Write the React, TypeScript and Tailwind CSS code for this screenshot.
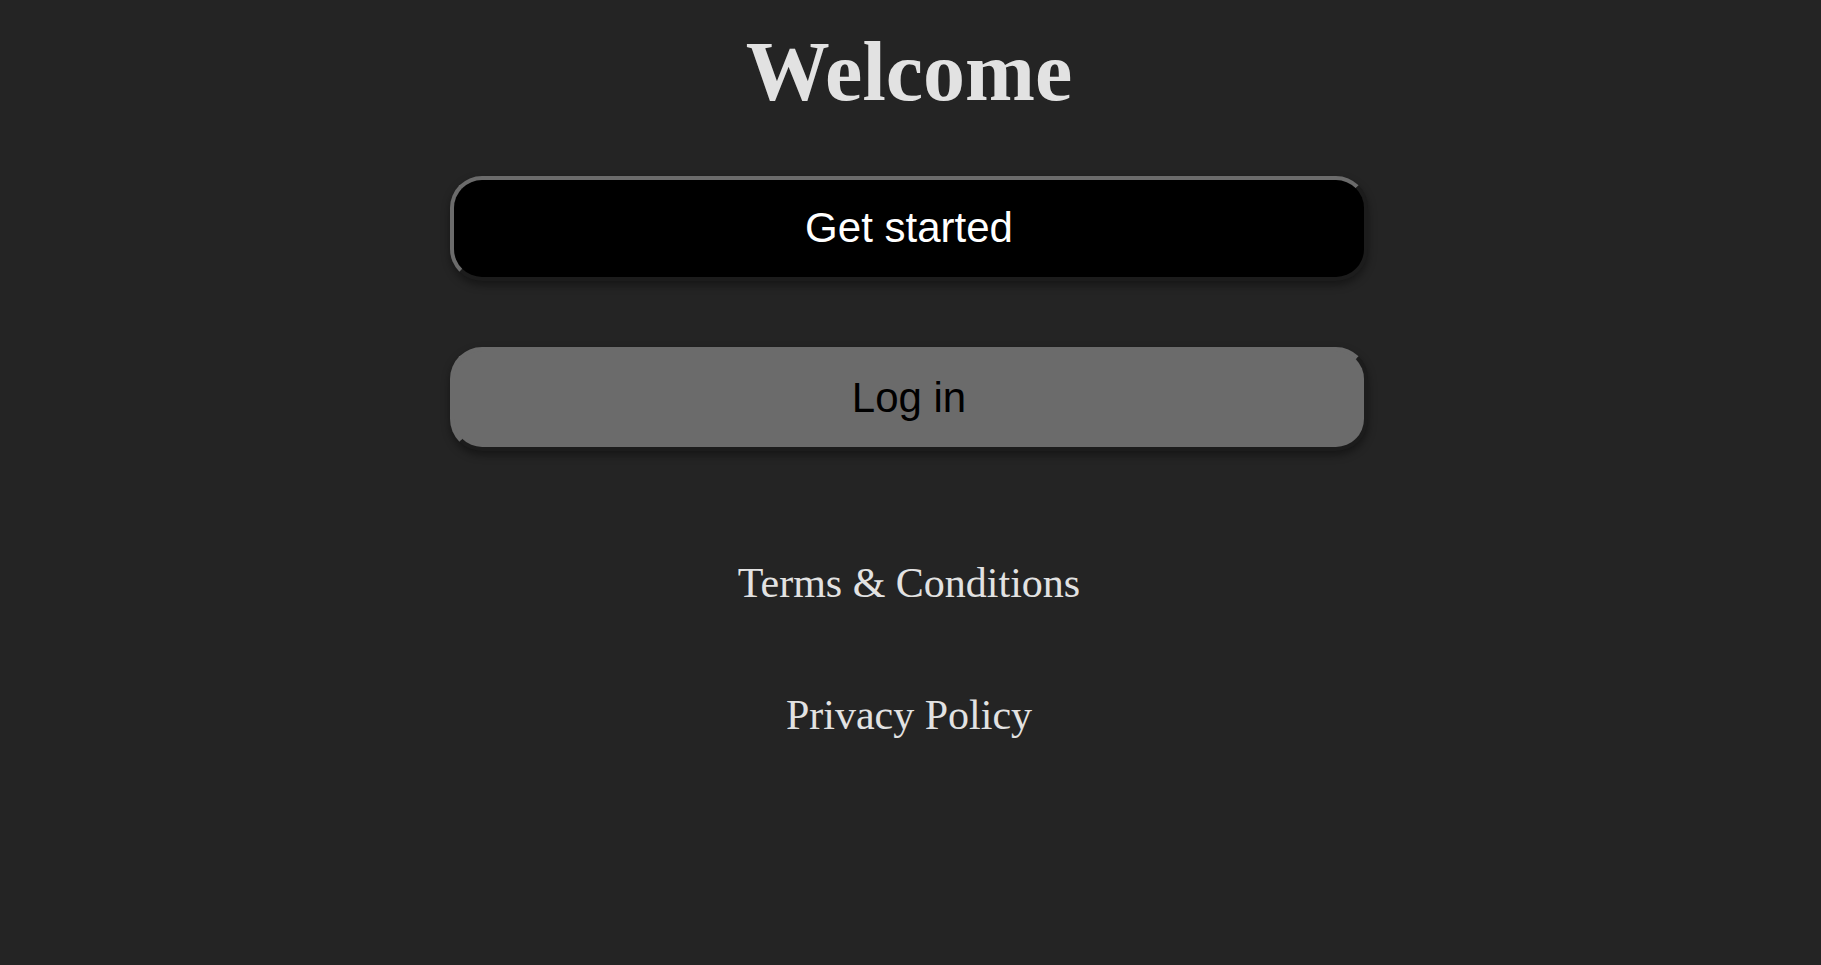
export default function App() {
  return (
    <div className="min-h-screen bg-[#242424] flex flex-col items-center text-center pr-[3px]">
      <h1 className="pt-[24px] text-[84px] leading-[96px] font-bold text-[#e2e2e2] font-['Liberation_Serif',serif]">
        Welcome
      </h1>

      <div className="mt-[56px] flex flex-col gap-[66px] w-[918px]">
        <button className="w-full pt-[24px] pb-[25px] rounded-[32px] border-4 border-t-[#6b6b6b] border-l-[#6b6b6b] border-b-[#1c1c1c] border-r-[#1c1c1c] bg-black text-white text-[42px] leading-[48px] font-['Liberation_Sans',sans-serif] shadow-[0_4px_9px_rgba(0,0,0,0.4)]">
          Get started
        </button>
        <button className="w-full pt-[23px] pb-[25px] rounded-[32px] border-4 border-t-[#6b6b6b] border-l-[#6b6b6b] border-b-[#1c1c1c] border-r-[#1c1c1c] bg-[#6b6b6b] text-black text-[42px] leading-[48px] font-['Liberation_Sans',sans-serif] shadow-[0_4px_9px_rgba(0,0,0,0.4)]">
          Log in
        </button>
      </div>

      <div className="mt-[108px] flex flex-col gap-[84px] text-[42px] leading-[48px] text-[#e2e2e2] font-['Liberation_Serif',serif]">
        <a href="#">Terms &amp; Conditions</a>
        <a href="#">Privacy Policy</a>
      </div>
    </div>
  )
}
